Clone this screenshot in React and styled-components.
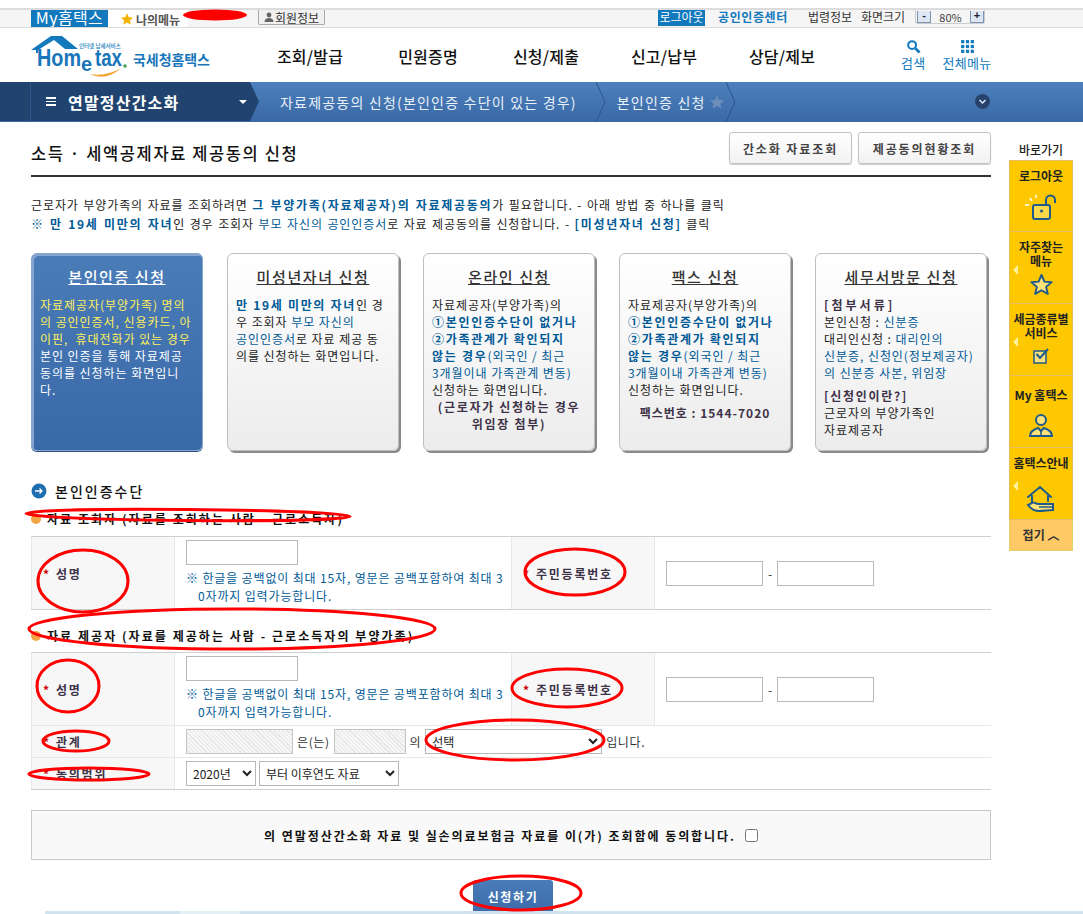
import React from 'react';
import styled, { createGlobalStyle } from 'styled-components';

const GlobalStyle = createGlobalStyle`
  html, body {
    margin: 0;
    padding: 0;
    background: #fff;
  }
  body {
    font-family: "Noto Sans CJK KR", "Liberation Sans", sans-serif;
    font-size: 12px;
    color: #222;
  }
  * { box-sizing: border-box; }
`;

const Page = styled.div`
  position: relative;
  width: 1083px;
  height: 914px;
  overflow: hidden;
  background: #fff;
`;

const Marks = styled.svg`
  position: absolute;
  left: 0;
  top: 0;
  pointer-events: none;
`;

/* top utility bar */
const UtilBar = styled.div`
  margin-top: 8px;
  height: 20px;
  display: flex;
  align-items: flex-start;
  padding-left: 31px;
  background: #f5f5f5;
  border-top: 2px solid #dcdcdc;
  border-bottom: 1px solid #dcdcdc;
  overflow: hidden;
`;

const MyTab = styled.div`
  width: 77px;
  height: 18px;
  background: #1279bd;
  color: #fff;
  font-size: 16px;
  line-height: 14px;
  text-align: center;
  letter-spacing: 0.4px;
`;

const MenuTab = styled.div`
  width: 80px;
  height: 18px;
  background: #fff;
  display: flex;
  align-items: center;
  gap: 2px;
  padding-left: 12px;
  font-size: 12px;
  font-weight: 700;
  color: #555;
`;

const UserName = styled.div`
  width: 70px;
`;

const InfoButton = styled.div`
  width: 67px;
  height: 15px;
  border: 1px solid #aaa;
  border-top: 0;
  border-radius: 0 0 2px 2px;
  background: #f0f0f0;
  display: flex;
  align-items: center;
  justify-content: center;
  gap: 1px;
  font-size: 12px;
  color: #333;
`;

const UtilRight = styled.div`
  margin-left: auto;
  height: 18px;
  display: flex;
  align-items: flex-start;
  padding-right: 98px;
`;

const LogoutTag = styled.div`
  width: 47px;
  height: 16px;
  background: #1279bd;
  color: #fff;
  font-size: 12px;
  line-height: 14px;
  text-align: center;
`;

const CertLink = styled.div`
  width: 103px;
  padding-left: 13px;
  font-size: 12px;
  font-weight: 700;
  line-height: 14px;
  color: #1279bd;
  letter-spacing: 0.6px;
`;

const UtilText = styled.div`
  width: ${(p) => p.$w}px;
  font-size: 12px;
  line-height: 14px;
  color: #333;
`;

const ZoomBox = styled.div`
  width: 70px;
  height: 14px;
  display: flex;
  align-items: center;
  justify-content: space-between;
  border: 1px solid #ccc;
  border-top: 0;
  border-radius: 0 0 3px 3px;
  padding: 0 0 0 1px;
  font-size: 11px;
  color: #444;
`;

const ZoomKey = styled.span`
  width: 14px;
  height: 12px;
  border: 1px solid #7d93b5;
  border-top: 0;
  background: #dfe7f2;
  font-size: 11px;
  font-weight: 700;
  line-height: 9px;
  text-align: center;
  color: #223;
  font-family: "Liberation Sans", sans-serif;
`;

/* main navigation */
const NavRow = styled.div`
  height: 54px;
  display: flex;
  align-items: center;
`;

const Logo = styled.svg`
  margin-left: 30px;
  flex: none;
`;

const MainMenu = styled.div`
  margin-left: 39px;
  display: grid;
  grid-template-columns: repeat(5, 118px);
  padding-top: 2px;
`;

const MenuItem = styled.div`
  text-align: center;
  font-size: 16px;
  font-weight: 500;
  letter-spacing: 0.2px;
  color: #111;
`;

const IconLinks = styled.div`
  margin-left: 60px;
  display: flex;
  gap: 17px;
`;

const IconLink = styled.div`
  display: flex;
  flex-direction: column;
  align-items: center;
  font-size: 13px;
  letter-spacing: 0.3px;
  color: #1279bd;
  line-height: 18px;
`;

/* breadcrumb */
const Crumbs = styled.div`
  height: 40px;
  display: flex;
  align-items: stretch;
  background: linear-gradient(#4d80bc, #3a69a6);
  color: #e8f0f8;
  border-bottom: 1px solid #3a69a6;
`;

const CrumbHome = styled.div`
  width: 259px;
  display: flex;
  align-items: center;
  padding-left: 46px;
  background: linear-gradient(90deg, #20446f 30px, #2b568c 30px, #2b568c 31px, #20446f 31px);
  clip-path: polygon(0 0, 250px 0, 259px 50%, 250px 100%, 0 100%);
  color: #fff;
  font-size: 16px;
  font-weight: 700;
  letter-spacing: 1.2px;
`;

const Burger = styled.span`
  width: 10px;
  height: 9px;
  margin-right: 12px;
  border-top: 2px solid #fff;
  border-bottom: 2px solid #fff;
  background: linear-gradient(transparent 2px, #fff 2px, #fff 3px, transparent 3px);
  flex: none;
`;

const Caret = styled.span`
  margin-left: 60px;
  width: 0;
  height: 0;
  border-left: 4px solid transparent;
  border-right: 4px solid transparent;
  border-top: 4px solid #fff;
`;

const CrumbText = styled.div`
  display: flex;
  align-items: center;
  gap: 3px;
  margin-left: ${(p) => p.$ml}px;
  font-size: 14px;
  letter-spacing: 1.2px;
  white-space: nowrap;
`;

const Chevron = styled.svg`
  margin-left: ${(p) => p.$ml}px;
  flex: none;
`;

const CircleDown = styled.span`
  margin-left: 238px;
  align-self: center;
  width: 15px;
  height: 15px;
  border-radius: 50%;
  background: #27436d;
  display: flex;
  align-items: center;
  justify-content: center;
`;

/* content + quick menu */
const Body = styled.div`
  display: flex;
  align-items: flex-start;
`;

const Main = styled.main`
  width: 960px;
  margin-left: 31px;
`;

const TitleRow = styled.div`
  height: 55px;
  padding-top: 10px;
  display: flex;
  border-bottom: 2px solid #333;
`;

const PageTitle = styled.h1`
  margin: 0;
  padding-top: 9px;
  font-size: 16.5px;
  font-weight: 500;
  letter-spacing: 1.6px;
  color: #111;
  line-height: 24px;
`;

const TopButtons = styled.div`
  margin-left: auto;
  display: flex;
  gap: 6px;
  height: 32px;
`;

const TopButton = styled.div`
  width: ${(p) => p.$w}px;
  border: 1px solid #c2c2c2;
  border-radius: 3px;
  background: linear-gradient(#fff, #f2f2f2);
  box-shadow: 0 1px 1px #ccc;
  display: flex;
  align-items: center;
  justify-content: center;
  font-size: 12px;
  font-weight: 700;
  letter-spacing: 1.9px;
  color: #444;
`;

const Intro = styled.p`
  margin: 18px 0 0;
  font-size: 12px;
  line-height: 19px;
  letter-spacing: 0.9px;
  word-spacing: 1px;
  color: #222;
`;

const Blue = styled.span`
  color: #005a96;
  font-weight: ${(p) => (p.$bold ? 700 : 400)};
  letter-spacing: ${(p) => (p.$bold ? '1.7px' : 'inherit')};
`;

const Cards = styled.div`
  margin-top: 20px;
  display: flex;
  gap: 24px;
`;

const Card = styled.div`
  width: 172px;
  height: 198px;
  padding: 13px 8px 0;
  border-radius: 6px;
  border: 1px solid ${(p) => (p.$active ? '#86a6cf' : '#bdbdbd')};
  background: ${(p) => (p.$active ? 'linear-gradient(#4a7cb8, #3969a7)' : 'linear-gradient(#fff, #ececec)')};
  box-shadow: ${(p) => (p.$active ? 'inset 2px 2px 0 #86a6cf, 0 1px 0 #2b5283' : '2px 2px 0 #8a8a8a')};
  color: ${(p) => (p.$active ? '#fff' : '#222')};
  font-size: 12px;
  line-height: 17px;
  letter-spacing: 0.95px;
  white-space: nowrap;
`;

const CardTitle = styled.div`
  margin-bottom: 9px;
  text-align: center;
  font-size: 15px;
  font-weight: 500;
  line-height: 20px;
  letter-spacing: 1.6px;
  text-decoration: underline;
  color: ${(p) => (p.$active ? '#fff' : '#333')};
`;

const Yellow = styled.span`
  color: #ffef5c;
`;

const DarkBold = styled.div`
  font-weight: 700;
  letter-spacing: ${(p) => p.$ls || 1.7}px;
  color: #3d3248;
  text-align: ${(p) => (p.$center ? 'center' : 'left')};
  margin-top: ${(p) => p.$mt || 0}px;
`;

const SectionHead = styled.div`
  margin-top: 30px;
  display: flex;
  align-items: center;
  gap: 8px;
  font-size: 14px;
  font-weight: 500;
  letter-spacing: 2px;
  color: #111;
  line-height: 20px;
`;

const SubHead = styled.div`
  margin-top: ${(p) => p.$mt}px;
  display: flex;
  align-items: center;
  gap: 6px;
  font-size: 12px;
  font-weight: 700;
  letter-spacing: 2.05px;
  line-height: 16px;
  color: #111;
`;

const Dot = styled.span`
  width: 10px;
  height: 10px;
  border-radius: 50%;
  background: #f3a545;
  flex: none;
`;

const Table = styled.div`
  margin-top: ${(p) => p.$mt}px;
  border-top: 1px solid #cfcfcf;
  border-bottom: 1px solid #cfcfcf;
`;

const TwoCols = styled.div`
  display: grid;
  grid-template-columns: 144px 336px 144px 336px;
  height: ${(p) => p.$h}px;
`;

const FullRow = styled.div`
  display: grid;
  grid-template-columns: 144px 1fr;
  height: 32px;
  border-top: 1px solid #e8e8e8;
`;

const Label = styled.div`
  display: flex;
  align-items: center;
  gap: 5px;
  padding-left: 11px;
  background: #f7f7f7;
  border-left: 1px solid #e8e8e8;
  border-right: 1px solid #e8e8e8;
  font-size: 12px;
  font-weight: 700;
  letter-spacing: 1.8px;
  color: #3d3248;
`;

const Req = styled.span`
  color: #c00;
  font-weight: 700;
`;

const ValueCell = styled.div`
  padding: ${(p) => (p.$top ? '3px 11px 0' : '0 11px')};
  display: flex;
  align-items: ${(p) => (p.$top ? 'flex-start' : 'center')};
  flex-direction: ${(p) => (p.$top ? 'column' : 'row')};
  gap: ${(p) => p.$gap || 4}px;
`;

const TextInput = styled.input`
  width: ${(p) => p.$w}px;
  height: 25px;
  border: 1px solid #b8b8b8;
  background: #fff;
  padding: 0;
  outline: 0;
`;

const Hatched = styled.div`
  width: ${(p) => p.$w}px;
  height: 25px;
  border: 1px solid #c4c4c4;
  background: repeating-linear-gradient(45deg, #f6f6f6, #f6f6f6 2px, #e6e6e6 2px, #e6e6e6 3px);
`;

const Note = styled.div`
  padding-left: 12px;
  text-indent: -12px;
  font-size: 12px;
  line-height: 18px;
  letter-spacing: 0.85px;
  white-space: nowrap;
  color: #005a96;
`;

const Sep = styled.span`
  margin: 0 1px;
  color: #333;
`;

const Plain = styled.span`
  font-size: 12px;
  letter-spacing: 0.6px;
  color: #333;
  white-space: nowrap;
`;

const Select = styled.select`
  width: ${(p) => p.$w}px;
  height: 25px;
  border: 1px solid #b8b8b8;
  background: #fff;
  padding: 0 2px;
  font: 12px "Noto Sans CJK KR", sans-serif;
  color: #222;
  border-radius: 0;
  outline: 0;
`;

const Agree = styled.div`
  margin-top: 20px;
  height: 50px;
  border: 1px solid #c8c8c8;
  background: #f9f9f9;
  display: flex;
  align-items: center;
  justify-content: center;
  gap: 9px;
  font-size: 12px;
  font-weight: 700;
  letter-spacing: 1.95px;
  color: #111;
`;

const AgreeCheck = styled.input`
  width: 13px;
  height: 13px;
  margin: 0;
`;

const SubmitRow = styled.div`
  margin-top: 20px;
  padding-left: 4px;
  display: flex;
  justify-content: center;
`;

const Submit = styled.div`
  width: 80px;
  height: 40px;
  padding-top: 8px;
  background: linear-gradient(#4a7cb8, #3969a7);
  border-radius: 3px 3px 0 0;
  color: #fff;
  font-size: 12px;
  font-weight: 700;
  letter-spacing: 1.6px;
  text-align: center;
`;

const Quick = styled.aside`
  width: 64px;
  margin-left: 18px;
  padding-top: 19px;
`;

const QuickTitle = styled.div`
  height: 19px;
  text-align: center;
  font-size: 12px;
  font-weight: 500;
  line-height: 17px;
  color: #222;
`;

const QuickItem = styled.div`
  position: relative;
  height: 72px;
  background: #fdc800;
  border: 1px solid #e5bd62;
  border-top-width: ${(p) => (p.$first ? 1 : 0)}px;
  padding-top: ${(p) => p.$pt || 8}px;
  padding-bottom: ${(p) => p.$pb ?? 10}px;
  display: flex;
  flex-direction: column;
  align-items: center;
  justify-content: space-between;
  text-align: center;
  font-size: 12px;
  font-weight: 700;
  line-height: 14px;
  white-space: nowrap;
  color: #222;

  &::before {
    content: ${(p) => (p.$more ? "''" : 'none')};
    position: absolute;
    left: 3px;
    top: 33px;
    border-top: 5px solid transparent;
    border-bottom: 5px solid transparent;
    border-right: 5px solid #fff29c;
  }
`;

const QuickFold = styled.div`
  height: 31px;
  background: #ffc966;
  border: 1px solid #e0cf6d;
  border-top: 0;
  text-align: center;
  font-size: 12px;
  font-weight: 700;
  line-height: 29px;
  color: #333;
`;

const FooterStrip = styled.div`
  position: absolute;
  left: 0;
  right: 0;
  bottom: 0;
  height: 3px;
  background: linear-gradient(90deg, #fff 45px, #cfe4ee 45px, #cfe4ee 180px, #e3f0f6 180px, #e3f0f6 240px, #cfe4ee 240px);
`;

const StarIcon = ({ size = 14, fill = '#f5b400', stroke = 'none', width = 0 }) => (
  <svg width={size} height={size} viewBox="0 0 24 24">
    <path d="M12 2l3 7 7.5.6-5.7 4.9 1.8 7.3L12 18l-6.6 3.8 1.8-7.3L1.5 9.6 9 9z" fill={fill} stroke={stroke} strokeWidth={width} strokeLinejoin="round" />
  </svg>
);

const App = () => (
  <Page>
    <GlobalStyle />
    <UtilBar>
      <MyTab>My홈택스</MyTab>
      <MenuTab><StarIcon size={14} />나의메뉴</MenuTab>
      <UserName />
      <InfoButton>
        <svg width="10" height="10" viewBox="0 0 10 10">
          <circle cx="5" cy="3" r="2.4" fill="#666" />
          <path d="M0.5 10c0-3 2-4 4.5-4s4.500 1 4.500 4z" fill="#666" />
        </svg>
        회원정보
      </InfoButton>
      <UtilRight>
        <LogoutTag>로그아웃</LogoutTag>
        <CertLink>공인인증센터</CertLink>
        <UtilText $w={53}>법령정보</UtilText>
        <UtilText $w={54}>화면크기</UtilText>
        <ZoomBox>
          <ZoomKey>-</ZoomKey>
          80%
          <ZoomKey>+</ZoomKey>
        </ZoomBox>
      </UtilRight>
    </UtilBar>

    <NavRow>
      <Logo width="182" height="54" viewBox="0 0 182 54">
        <path d="M1 22L21 8h11l16 13H35L24 12 8 22v3H6v-3z" fill="#1279bd" />
        <text x="49" y="20" fontSize="5.5" fontWeight="500" fill="#1279bd" fontFamily="Noto Sans CJK KR">인터넷 납세서비스</text>
        <text x="7" y="38" fontSize="23" fontWeight="700" fill="#1a76bb" fontFamily="Liberation Sans" textLength="44" lengthAdjust="spacingAndGlyphs">Hom</text>
        <text x="51" y="43" fontSize="20" fontWeight="700" fill="#1a76bb" fontFamily="Liberation Sans">e</text>
        <text x="65" y="38" fontSize="23" fontWeight="700" fill="#1a76bb" fontFamily="Liberation Sans" textLength="27" lengthAdjust="spacingAndGlyphs">tax</text>
        <circle cx="95" cy="38" r="1.700" fill="#3a9e4b" />
        <path d="M60 46c10 5 22 3 31-6-8 5-20 8-31 6z" fill="#f3a73a" />
        <text x="103" y="37" fontSize="14" fontWeight="700" fill="#1a76bb" fontFamily="Noto Sans CJK KR" textLength="77">국세청홈택스</text>
      </Logo>
      <MainMenu>
        <MenuItem>조회/발급</MenuItem>
        <MenuItem>민원증명</MenuItem>
        <MenuItem>신청/제출</MenuItem>
        <MenuItem>신고/납부</MenuItem>
        <MenuItem>상담/제보</MenuItem>
      </MainMenu>
      <IconLinks>
        <IconLink>
          <svg width="15" height="15" viewBox="0 0 16 16" fill="none" stroke="#1279bd">
            <circle cx="6.500" cy="6.500" r="4.200" strokeWidth="2.200" />
            <path d="M10 10l4.500 4.500" strokeWidth="3" />
          </svg>
          검색
        </IconLink>
        <IconLink>
          <svg width="15" height="15" viewBox="0 0 14 14" fill="#1279bd">
            {[1, 5.500, 10].map((y) => [1, 5.500, 10].map((x) => <rect key={`${x}-${y}`} x={x} y={y} width="3" height="3" />))}
          </svg>
          전체메뉴
        </IconLink>
      </IconLinks>
    </NavRow>

    <Crumbs>
      <CrumbHome>
        <Burger />
        연말정산간소화
        <Caret />
      </CrumbHome>
      <CrumbText $ml={21}>자료제공동의 신청(본인인증 수단이 있는 경우)</CrumbText>
      <Chevron $ml={18} width="12" height="40" viewBox="0 0 12 40" fill="none" stroke="#2c5488"><path d="M1 0l9 20-9 20" /></Chevron>
      <CrumbText $ml={10}>
        본인인증 신청
        <StarIcon size={16} fill="#6e8fb9" />
      </CrumbText>
      <Chevron $ml={0} width="12" height="40" viewBox="0 0 12 40" fill="none" stroke="#2c5488"><path d="M1 0l9 20-9 20" /></Chevron>
      <CircleDown>
        <svg width="9" height="9" viewBox="0 0 9 9" fill="none" stroke="#dfe8f3" strokeWidth="1.500"><path d="M1.500 3l3 3 3-3" /></svg>
      </CircleDown>
    </Crumbs>

    <Body>
      <Main>
        <TitleRow>
          <PageTitle>소득 · 세액공제자료 제공동의 신청</PageTitle>
          <TopButtons>
            <TopButton $w={123}>간소화 자료조회</TopButton>
            <TopButton $w={133}>제공동의현황조회</TopButton>
          </TopButtons>
        </TitleRow>

        <Intro>
          근로자가 부양가족의 자료를 조회하려면 <Blue $bold>그 부양가족(자료제공자)의 자료제공동의</Blue>가 필요합니다. - 아래 방법 중 하나를 클릭<br />
          <Blue $bold>※ 만 19세 미만의 자녀</Blue>인 경우 조회자 <Blue>부모 자신의 공인인증서</Blue>로 자료 제공동의를 신청합니다. - <Blue $bold>[미성년자녀 신청]</Blue> 클릭
        </Intro>

        <Cards>
          <Card $active>
            <CardTitle $active>본인인증 신청</CardTitle>
            <Yellow>자료제공자(부양가족) 명의<br />의 공인인증서, 신용카드, 아<br />이핀, &nbsp;휴대전화가 있는 경우</Yellow><br />
            본인 인증을 통해 자료제공<br />동의를 신청하는 화면입니<br />다.
          </Card>
          <Card>
            <CardTitle>미성년자녀 신청</CardTitle>
            <Blue $bold>만 19세 미만의 자녀</Blue>인 경<br />우 조회자 <Blue>부모 자신의</Blue><br />
            <Blue>공인인증서</Blue>로 자료 제공 동<br />의를 신청하는 화면입니다.
          </Card>
          <Card>
            <CardTitle>온라인 신청</CardTitle>
            자료제공자(부양가족)의<br />
            <Blue $bold>①본인인증수단이 없거나<br />②가족관계가 확인되지<br />않는 경우</Blue><Blue>(외국인 / 최근<br />3개월이내 가족관계 변동)</Blue><br />
            신청하는 화면입니다.
            <DarkBold $center>(근로자가 신청하는 경우<br />위임장 첨부)</DarkBold>
          </Card>
          <Card>
            <CardTitle>팩스 신청</CardTitle>
            자료제공자(부양가족)의<br />
            <Blue $bold>①본인인증수단이 없거나<br />②가족관계가 확인되지<br />않는 경우</Blue><Blue>(외국인 / 최근<br />3개월이내 가족관계 변동)</Blue><br />
            신청하는 화면입니다.
            <DarkBold $center $mt={6} $ls={1}>팩스번호 : 1544-7020</DarkBold>
          </Card>
          <Card>
            <CardTitle>세무서방문 신청</CardTitle>
            <DarkBold $ls={3}>[첨부서류]</DarkBold>
            본인신청 : <Blue>신분증</Blue><br />
            대리인신청 : <Blue>대리인의<br />신분증, 신청인(정보제공자)<br />의 신분증 사본, 위임장</Blue>
            <DarkBold $mt={6}>[신청인이란?]</DarkBold>
            근로자의 부양가족인<br />자료제공자
          </Card>
        </Cards>

        <SectionHead>
          <svg width="16" height="16" viewBox="0 0 16 16">
            <circle cx="8" cy="8" r="7.500" fill="#1f6fb0" />
            <path d="M4 8h7M8.500 5.500L11 8l-2.500 2.500" fill="none" stroke="#fff" strokeWidth="1.300" />
          </svg>
          본인인증수단
        </SectionHead>

        <SubHead $mt={10}><Dot />자료 조회자 (자료를 조회하는 사람 - 근로소득자)</SubHead>
        <Table $mt={9}>
          <TwoCols $h={72}>
            <Label><Req>*</Req>성명</Label>
            <ValueCell $top>
              <TextInput $w={112} />
              <Note>※ 한글을 공백없이 최대 15자, 영문은 공백포함하여 최대 3<br />0자까지 입력가능합니다.</Note>
            </ValueCell>
            <Label><Req>*</Req>주민등록번호</Label>
            <ValueCell>
              <TextInput $w={97} />
              <Sep>-</Sep>
              <TextInput $w={97} />
            </ValueCell>
          </TwoCols>
        </Table>

        <SubHead $mt={18}><Dot />자료 제공자 (자료를 제공하는 사람 - 근로소득자의 부양가족)</SubHead>
        <Table $mt={8}>
          <TwoCols $h={72}>
            <Label><Req>*</Req>성명</Label>
            <ValueCell $top>
              <TextInput $w={112} />
              <Note>※ 한글을 공백없이 최대 15자, 영문은 공백포함하여 최대 3<br />0자까지 입력가능합니다.</Note>
            </ValueCell>
            <Label><Req>*</Req>주민등록번호</Label>
            <ValueCell>
              <TextInput $w={97} />
              <Sep>-</Sep>
              <TextInput $w={97} />
            </ValueCell>
          </TwoCols>
          <FullRow>
            <Label><Req>*</Req>관계</Label>
            <ValueCell>
              <Hatched $w={107} />
              <Plain>은(는)</Plain>
              <Hatched $w={72} />
              <Plain>의</Plain>
              <Select $w={177}><option>선택</option></Select>
              <Plain>입니다.</Plain>
            </ValueCell>
          </FullRow>
          <FullRow>
            <Label><Req>*</Req>동의범위</Label>
            <ValueCell $gap={3}>
              <Select $w={70}><option>2020년</option></Select>
              <Select $w={140}><option>부터 이후연도 자료</option></Select>
            </ValueCell>
          </FullRow>
        </Table>

        <Agree>
          의 연말정산간소화 자료 및 실손의료보험금 자료를 이(가) 조회함에 동의합니다.
          <AgreeCheck type="checkbox" />
        </Agree>

        <SubmitRow>
          <Submit>신청하기</Submit>
        </SubmitRow>
      </Main>

      <Quick>
        <QuickTitle>바로가기</QuickTitle>
        <QuickItem $first>
          로그아웃
          <svg width="36" height="28" viewBox="0 0 36 28" fill="none" stroke="#1e5a8c" strokeWidth="2">
            <rect x="10" y="12" width="17" height="14" rx="2" fill="#fdd94a" />
            <path d="M23 12V7a4.500 4.500 0 0 1 9 0v3" />
            <circle cx="18.500" cy="18" r="1.500" fill="#1e5a8c" stroke="none" />
            <path d="M2 12h4M7 5l2 3M13 2v3" stroke="#fff" strokeWidth="1.500" />
          </svg>
        </QuickItem>
        <QuickItem $more $pb={7}>
          <span>자주찾는<br />메뉴</span>
          <StarIcon size={23} fill="#fde27a" stroke="#1e5a8c" width={2} />
        </QuickItem>
        <QuickItem $more>
          <span>세금종류별<br />서비스</span>
          <svg width="18" height="18" viewBox="0 0 18 18" fill="none" stroke="#1e5a8c" strokeWidth="1.500">
            <rect x="2" y="4" width="12" height="12" fill="#fde27a" />
            <path d="M4.500 7l3.500 4 8-9" strokeWidth="2" />
          </svg>
        </QuickItem>
        <QuickItem $pt={12}>
          My 홈택스
          <svg width="26" height="24" viewBox="0 0 26 24" fill="none" stroke="#1e5a8c" strokeWidth="2">
            <circle cx="13" cy="7" r="5" fill="#fde27a" />
            <path d="M2 23c0-5 5-7 8-8l3 3 3-3c3 1 8 3 8 8z" fill="#fde27a" />
            <path d="M13 18v5" strokeWidth="1.500" />
          </svg>
        </QuickItem>
        <QuickItem $more $pb={6}>
          홈택스안내
          <svg width="30" height="28" viewBox="0 0 30 28" fill="none" stroke="#1e5a8c" strokeWidth="2">
            <path d="M2 12L14 2l11 10M6 11v6M22 11v5" strokeLinecap="round" />
            <path d="M2 20c3 4 7 6 11 6 6 0 8-1 14-1v-6H13c-4 0-6-3-7-1z" fill="#fde27a" />
            <path d="M13 22h14" strokeWidth="1.500" />
          </svg>
        </QuickItem>
        <QuickFold>접기 ︿</QuickFold>
      </Quick>
    </Body>

    <FooterStrip />

    <Marks width="1083" height="914" viewBox="0 0 1083 914" fill="none" stroke="#f00" strokeWidth="3">
      <ellipse cx="215" cy="15" rx="32" ry="5.500" fill="#f00" stroke="none" />
      <ellipse cx="188" cy="515" rx="162" ry="5.500" transform="rotate(0.500 188 515)" />
      <ellipse cx="83" cy="581" rx="45" ry="31" />
      <ellipse cx="575" cy="572" rx="50" ry="23" />
      <ellipse cx="232" cy="629" rx="203" ry="20" />
      <ellipse cx="68" cy="686" rx="31" ry="26" />
      <ellipse cx="567" cy="688" rx="55" ry="19" />
      <ellipse cx="76" cy="741" rx="33" ry="10" />
      <ellipse cx="515" cy="740" rx="89" ry="20" />
      <ellipse cx="89" cy="774" rx="60" ry="6" />
      <ellipse cx="521" cy="893" rx="60" ry="17" />
    </Marks>
  </Page>
);

export default App;
